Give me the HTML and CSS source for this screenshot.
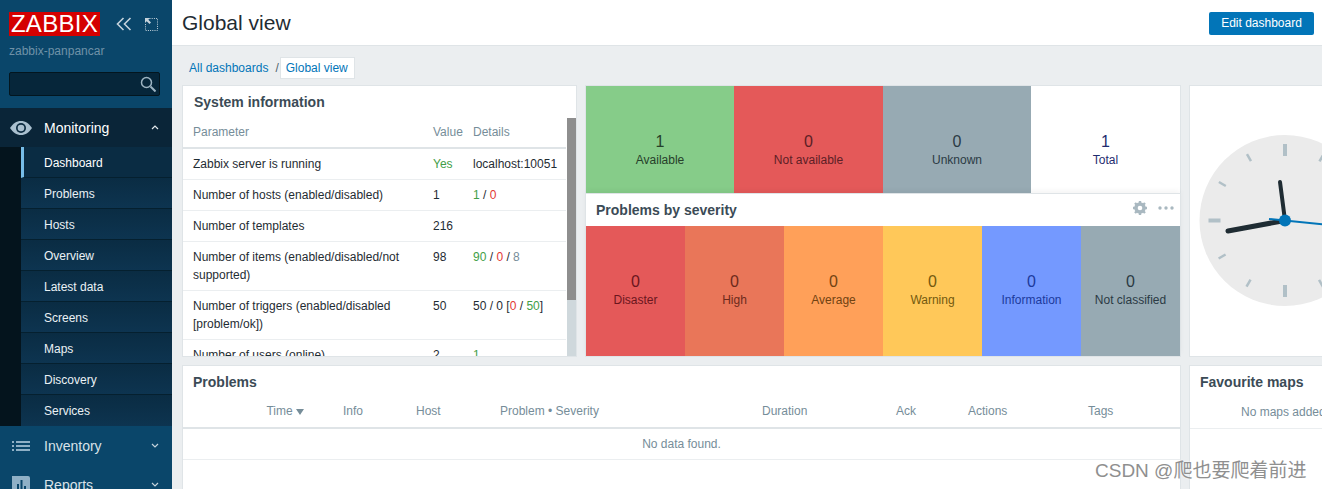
FILE: index.html
```html
<!DOCTYPE html>
<html lang="en">
<head>
    <meta charset="UTF-8">
    <title>Global view</title>
    <link rel="stylesheet" href="styles.css">
</head>
<body>
    <aside class="sidebar">
        <div class="brand">
            <span class="logo">ZABBIX</span>
            <svg class="brand-icon chevrons" width="16" height="14" viewBox="0 0 16 14"><path d="M7.5 1 1.5 7l6 6M14.500 1l-6 6 6 6" fill="none" stroke="#c5d3dc" stroke-width="1.600"/></svg>
            <svg class="brand-icon" width="14" height="14" viewBox="0 0 14 14"><path d="M5.500 1.500h8v12h-12v-7" fill="none" stroke="#c5d3dc" stroke-dasharray="1 1.200"/><path d="M1 1h5L4.300 2.700 7 5.500 5.500 7 2.700 4.300 1 6z" fill="#c5d3dc"/></svg>
        </div>
        <div class="server-name">zabbix-panpancar</div>
        <div class="search">
            <svg width="16" height="16" viewBox="0 0 16 16"><circle cx="6.500" cy="6.500" r="5" fill="none" stroke="#9db4c2" stroke-width="1.500"/><path d="m10.500 10.500 5 5" stroke="#9db4c2" stroke-width="2"/></svg>
        </div>
        <nav>
            <div class="menu-title active">
                <svg class="menu-icon" width="22" height="14" viewBox="0 0 22 14"><path d="M0 7c3-4.500 6.500-7 11-7s8 2.500 11 7c-3 4.500-6.500 7-11 7S3 11.500 0 7z" fill="#aac0cf"/><circle cx="11" cy="7" r="5" fill="#0b2a3f"/><circle cx="11" cy="7" r="3.300" fill="#aac0cf"/></svg>
                <span>Monitoring</span>
                <svg class="caret" width="8" height="5" viewBox="0 0 8 5"><path d="m1 4 3-3 3 3" fill="none" stroke="#e4eaee" stroke-width="1.200"/></svg>
            </div>
            <ul class="submenu">
                <li class="current">Dashboard</li>
                <li>Problems</li>
                <li>Hosts</li>
                <li>Overview</li>
                <li>Latest data</li>
                <li>Screens</li>
                <li>Maps</li>
                <li>Discovery</li>
                <li>Services</li>
            </ul>
            <div class="menu-title">
                <svg class="menu-icon" width="22" height="12" viewBox="0 0 22 12"><path d="M2 1h2v2H2zM2 5h2v2H2zM2 9h2v2H2zM6 1h14v2H6zM6 5h14v2H6zM6 9h14v2H6z" fill="#8fb0c6"/></svg>
                <span>Inventory</span>
                <svg class="caret" width="8" height="5" viewBox="0 0 8 5"><path d="m1 1 3 3 3-3" fill="none" stroke="#c5d3dc" stroke-width="1.200"/></svg>
            </div>
            <div class="menu-title">
                <svg class="menu-icon" width="22" height="18" viewBox="0 0 22 18"><path d="M2 0h16a2 2 0 0 1 2 2v16H2a2 2 0 0 1 0-2z" fill="#8fb0c6"/><path d="M7 8h2v10H7zM10.500 4h2v14h-2zM14 10h2v8h-2z" fill="#0a466a"/></svg>
                <span>Reports</span>
                <svg class="caret" width="8" height="5" viewBox="0 0 8 5"><path d="m1 1 3 3 3-3" fill="none" stroke="#c5d3dc" stroke-width="1.200"/></svg>
            </div>
        </nav>
    </aside>

    <main class="main">
        <header class="page-header">
            <h1>Global view</h1>
            <button class="edit-btn">Edit dashboard</button>
        </header>

        <div class="breadcrumbs">
            <a>All dashboards</a>
            <span class="sep">/</span>
            <a class="crumb-current">Global view</a>
        </div>

        <div class="dashboard">
            <section class="widget">
                <h2>System information</h2>
                <div class="sys-body">
                    <div class="sys-table-wrap">
                        <table class="sys-table">
                            <colgroup><col class="col-param"><col class="col-value"><col class="col-details"></colgroup>
                            <thead>
                                <tr><th>Parameter</th><th>Value</th><th>Details</th></tr>
                            </thead>
                            <tbody>
                                <tr><td>Zabbix server is running</td><td class="green">Yes</td><td>localhost:10051</td></tr>
                                <tr><td>Number of hosts (enabled/disabled)</td><td>1</td><td><span class="green">1</span> / <span class="red">0</span></td></tr>
                                <tr><td>Number of templates</td><td>216</td><td></td></tr>
                                <tr><td>Number of items (enabled/disabled/not supported)</td><td>98</td><td><span class="green">90</span> / <span class="red">0</span> / <span class="grey">8</span></td></tr>
                                <tr><td>Number of triggers (enabled/disabled [problem/ok])</td><td>50</td><td>50 / 0 [<span class="red">0</span> / <span class="green">50</span>]</td></tr>
                                <tr><td>Number of users (online)</td><td>2</td><td class="green">1</td></tr>
                            </tbody>
                        </table>
                    </div>
                    <div class="scrollbar"><div class="thumb"></div></div>
                </div>
            </section>

            <div class="middle">
                <section class="hosts">
                    <div class="tile available"><b>1</b><span>Available</span></div>
                    <div class="tile not-available"><b>0</b><span>Not available</span></div>
                    <div class="tile unknown"><b>0</b><span>Unknown</span></div>
                    <div class="tile total"><b>1</b><span>Total</span></div>
                </section>
                <section class="widget severity">
                    <div class="widget-head">
                        <h2>Problems by severity</h2>
                        <svg class="gear" width="16" height="16" viewBox="0 0 16 16">
                            <circle cx="8" cy="8" r="4.300" fill="none" stroke="#a9b8c0" stroke-width="3"/>
                            <path d="M8 1v14M1 8h14M3 3l10 10M13 3 3 13" stroke="#a9b8c0" stroke-width="2.400"/>
                            <circle cx="8" cy="8" r="2.300" fill="#fff"/>
                        </svg>
                        <svg class="dots" width="16" height="4" viewBox="0 0 16 4"><circle cx="2" cy="2" r="1.700" fill="#a9b8c0"/><circle cx="8" cy="2" r="1.700" fill="#a9b8c0"/><circle cx="14" cy="2" r="1.700" fill="#a9b8c0"/></svg>
                    </div>
                    <div class="sev-tiles">
                        <div class="tile disaster"><b>0</b><span>Disaster</span></div>
                        <div class="tile high"><b>0</b><span>High</span></div>
                        <div class="tile average"><b>0</b><span>Average</span></div>
                        <div class="tile warning"><b>0</b><span>Warning</span></div>
                        <div class="tile information"><b>0</b><span>Information</span></div>
                        <div class="tile unclassified"><b>0</b><span>Not classified</span></div>
                    </div>
                </section>
            </div>

            <section class="widget clock">
                <svg width="190" height="270" viewBox="0 0 190 270">
                    <circle cx="95" cy="134.500" r="85.500" fill="#ebebeb"/>
                    <g fill="#b1c0c7">
                        <rect x="93" y="58" width="4" height="12"/>
                        <rect x="93" y="58" width="4" height="12" transform="rotate(90 95 134.500)"/>
                        <rect x="93" y="58" width="4" height="12" transform="rotate(180 95 134.500)"/>
                        <rect x="93" y="58" width="4" height="12" transform="rotate(270 95 134.500)"/>
                        <rect x="94" y="58" width="2.500" height="8" transform="rotate(30 95 134.500)"/>
                        <rect x="94" y="58" width="2.500" height="8" transform="rotate(60 95 134.500)"/>
                        <rect x="94" y="58" width="2.500" height="8" transform="rotate(120 95 134.500)"/>
                        <rect x="94" y="58" width="2.500" height="8" transform="rotate(150 95 134.500)"/>
                        <rect x="94" y="58" width="2.500" height="8" transform="rotate(210 95 134.500)"/>
                        <rect x="94" y="58" width="2.500" height="8" transform="rotate(240 95 134.500)"/>
                        <rect x="94" y="58" width="2.500" height="8" transform="rotate(300 95 134.500)"/>
                        <rect x="94" y="58" width="2.500" height="8" transform="rotate(330 95 134.500)"/>
                    </g>
                    <path d="M95 134.500 38 145" stroke="#1f2c33" stroke-width="5" stroke-linecap="round"/>
                    <path d="M95 134.500 90 96" stroke="#1f2c33" stroke-width="4" stroke-linecap="round"/>
                    <path d="M79 133 170 142" stroke="#0275b8" stroke-width="2"/>
                    <circle cx="95" cy="134.500" r="6" fill="#0275b8"/>
                </svg>
            </section>

            <section class="widget problems">
                <h2>Problems</h2>
                <div class="prob-row prob-head">
                    <span class="time-col">Time <svg width="8" height="6" viewBox="0 0 8 6"><path d="M0 0h8L4 6z" fill="#768d99"/></svg></span>
                    <span>Info</span>
                    <span>Host</span>
                    <span>Problem &bull; Severity</span>
                    <span>Duration</span>
                    <span>Ack</span>
                    <span>Actions</span>
                    <span>Tags</span>
                </div>
                <div class="no-data">No data found.</div>
            </section>

            <section class="widget favourites">
                <h2>Favourite maps</h2>
                <div class="no-maps">No maps added.</div>
            </section>
        </div>
    </main>

    <div class="watermark">CSDN @爬也要爬着前进</div>
</body>
</html>
```

FILE: styles.css
```css
* {
    box-sizing: border-box;
}
html, body {
    height: 489px;
    overflow: hidden;
}
body {
    margin: 0;
    display: flex;
    font-family: "Liberation Sans", Arial, "Noto Sans CJK SC", sans-serif;
    font-size: 12px;
    color: #1f2c33;
    background-color: #ebeef0;
}

/* sidebar */
.sidebar {
    width: 172px;
    flex: none;
    background: #0a466a;
    color: #fff;
}
.brand {
    display: flex;
    align-items: center;
    padding: 12px 0 0 9px;
    height: 36px;
}
.logo {
    width: 91px;
    height: 24px;
    background: #d40000;
    color: #fff;
    font-size: 24px;
    line-height: 24px;
    letter-spacing: 0.3px;
    text-align: center;
}
.brand-icon {
    margin-left: 12px;
}
.chevrons {
    margin-left: 16px;
}
.server-name {
    padding: 8px 0 0 9px;
    height: 36px;
    line-height: 15px;
    color: #6f92a8;
}
.search {
    margin-left: 9px;
    width: 151px;
    height: 24px;
    background: #06263a;
    border: 1px solid #03161f;
    border-radius: 2px;
    display: flex;
    justify-content: flex-end;
    align-items: center;
    padding-right: 3px;
}
nav {
    margin-top: 12px;
}
.menu-title {
    height: 39px;
    display: flex;
    align-items: center;
    padding-left: 10px;
    font-size: 14px;
    color: #d9e2e8;
}
.menu-title.active {
    background: #0a2538;
    color: #fff;
}
.menu-icon {
    flex: none;
    margin-right: 12px;
}
.caret {
    margin-left: auto;
    margin-right: 13px;
}
.submenu {
    list-style: none;
    margin: 0;
    padding: 0 0 0 21px;
    background: #04141d;
}
.submenu li {
    height: 31px;
    line-height: 32px;
    padding-left: 23px;
    background: linear-gradient(#0a2c43, #0d3450);
    border-bottom: 1px solid #05202f;
    color: #eaf1f5;
}
.submenu li:last-child {
    border-bottom: none;
}
.submenu li.current {
    padding-left: 20px;
    border-left: 3px solid #77bde8;
    background: #0a2c43;
    color: #fff;
}

/* main */
.main {
    flex: 1;
    min-width: 0;
    overflow: hidden;
}
.page-header {
    height: 46px;
    background: #fff;
    border-bottom: 1px solid #dfe4e7;
    display: flex;
    justify-content: space-between;
    align-items: flex-start;
    padding: 12px 8px 0 10px;
}
h1 {
    margin: -1px 0 0;
    font-size: 21px;
    font-weight: normal;
    line-height: 23px;
    color: #1f2c33;
}
.edit-btn {
    width: 105px;
    height: 23px;
    padding: 0 0 2px;
    background: #0275b8;
    color: #fff;
    border: none;
    border-radius: 2px;
    font: inherit;
}
.breadcrumbs {
    display: flex;
    align-items: center;
    height: 20px;
    margin: 12px 0 8px 17px;
}
.breadcrumbs a {
    color: #0275b8;
}
.sep {
    margin: 0 2px 0 7px;
    color: #4f5f69;
}
.crumb-current {
    background: #fff;
    height: 20px;
    line-height: 20px;
    padding: 0 6px 0 5px;
    box-shadow: 0 0 0 1px #dfe4e7;
}

.dashboard {
    display: grid;
    grid-template-columns: 393px 594px 190px;
    grid-template-rows: 270px 200px;
    gap: 10px;
    margin-left: 11px;
    width: 1200px;
}
.widget {
    background: #fff;
    box-shadow: 0 0 0 1px #dfe4e7;
    overflow: hidden;
}
h2 {
    margin: 0;
    height: 32px;
    line-height: 32px;
    padding-left: 11px;
    font-size: 14px;
    font-weight: bold;
    color: #3b4b56;
}

/* system information */
.sys-body {
    display: flex;
    height: 238px;
}
.sys-table-wrap {
    flex: 1;
    overflow: hidden;
}
.sys-table {
    width: 383px;
    table-layout: fixed;
    border-collapse: collapse;
}
.col-param {
    width: 245px;
}
.col-value {
    width: 40px;
}
.sys-table th {
    height: 30px;
    padding: 0 5px 2px;
    font-weight: normal;
    text-align: left;
    color: #768d99;
    border-bottom: 2px solid #dfe4e7;
}
.sys-table td {
    padding: 6px 5px;
    line-height: 18px;
    vertical-align: top;
    border-bottom: 1px solid #ebeef0;
}
.sys-table th:first-child,
.sys-table td:first-child {
    padding-left: 10px;
}
.green {
    color: #429e47;
}
.red {
    color: #e33734;
}
.grey {
    color: #768d99;
}
.scrollbar {
    width: 9px;
    flex: none;
    background: #cfd8dc;
}
.thumb {
    height: 182px;
    background: #8e8e8e;
}

/* tiles */
.middle {
    display: flex;
    flex-direction: column;
    gap: 1px;
    min-height: 0;
}
.hosts {
    display: grid;
    grid-template-columns: 148px 149px 148px 149px;
    height: 107px;
    background: #fff;
    box-shadow: 0 0 0 1px #dfe4e7;
}
.hosts .tile {
    padding-top: 20px;
}
.severity {
    flex: 1;
    display: flex;
    flex-direction: column;
    box-shadow: 0 0 0 1px #dfe4e7, 0 -3px 6px rgba(0, 0, 0, 0.05);
}
.widget-head {
    height: 32px;
    flex: none;
    display: flex;
    align-items: flex-start;
}
.widget-head h2 {
    padding-left: 10px;
    flex: 1;
    line-height: 33px;
}
.gear {
    margin: 6px 10px 0 0;
}
.dots {
    margin: 12px 6px 0 0;
}
.sev-tiles {
    flex: 1;
    display: flex;
}
.sev-tiles .tile {
    flex: 1;
    padding-bottom: 3px;
}
.tile {
    display: flex;
    flex-direction: column;
    align-items: center;
    justify-content: center;
}
.tile b {
    font-weight: normal;
    font-size: 16px;
    line-height: 20px;
}
.tile span {
    line-height: 16px;
}
.available {
    background: #86cc89;
    color: #26402a;
}
.not-available {
    background: #e45959;
    color: #5c2026;
}
.unknown {
    background: #97aab3;
    color: #2b3a44;
}
.total {
    color: #1f2c6f;
}
.disaster {
    background: #e45959;
    color: #6a161e;
}
.high {
    background: #e97659;
    color: #6d2a1c;
}
.average {
    background: #ffa059;
    color: #714212;
}
.warning {
    background: #ffc859;
    color: #73590f;
}
.information {
    background: #7499ff;
    color: #1c3a9c;
}
.unclassified {
    background: #97aab3;
    color: #2b3a44;
}

/* problems */
.problems {
    grid-column: 1 / span 2;
}
.prob-row {
    display: grid;
    grid-template-columns: 160px 73px 84px 262px 134px 72px 120px 92px;
}
.prob-head {
    height: 31px;
    line-height: 26px;
    color: #768d99;
    border-bottom: 2px solid #dfe4e7;
}
.problems h2,
.favourites h2 {
    padding-left: 10px;
}
.time-col {
    text-align: right;
    padding-right: 39px;
}
.no-data {
    height: 31px;
    line-height: 31px;
    text-align: center;
    color: #768d99;
    border-bottom: 1px solid #ebeef0;
}
.no-maps {
    height: 31px;
    line-height: 28px;
    text-align: center;
    color: #768d99;
    border-bottom: 1px solid #ebeef0;
}

/* watermark sits over the page corner */
.watermark {
    position: absolute;
    left: 1095px;
    top: 459px;
    font-size: 19px;
    line-height: 24px;
    color: #8f8f8f;
    text-shadow: 0 0 2px #fff;
    white-space: nowrap;
}
```
